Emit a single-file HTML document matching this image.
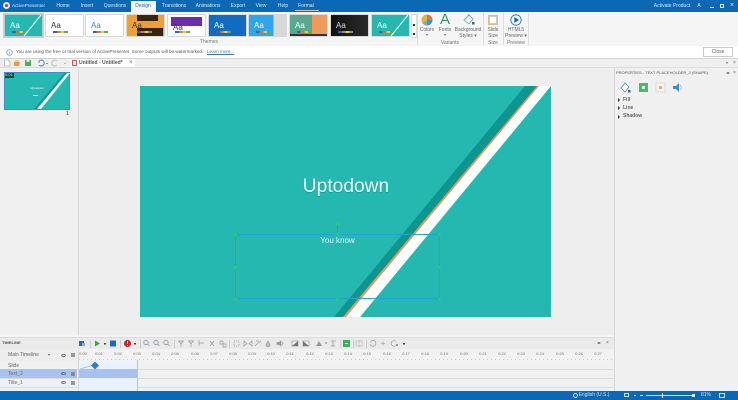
<!DOCTYPE html>
<html><head><meta charset="utf-8">
<style>
html,body{margin:0;padding:0;width:738px;height:400px;overflow:hidden;background:#f0f0f0;font-family:"Liberation Sans",sans-serif;color:#444}
.a{position:absolute}
.t{position:absolute;font-size:5px;line-height:6px;white-space:nowrap;color:#666}
.c{text-align:center;transform:translateX(-50%)}
.tab{position:absolute;top:2px;font-size:5px;line-height:8px;color:#dbe9f5;transform:translateX(-50%);white-space:nowrap}
.th{position:absolute;top:15px;width:37px;height:21px;overflow:hidden;background:#fff;box-shadow:0 0 0 .5px #bbb}
.aa{position:absolute;left:5px;top:6px;font-size:8px;line-height:9px}
.dots{position:absolute;left:7px;top:16px;width:15px;height:1.5px;background:linear-gradient(90deg,#36a,#36a 25%,#c74 25%,#c74 50%,#dc4 50%,#dc4 75%,#6a5 75%)}
.sep{position:absolute;width:1px;background:#ddd}
.h{position:absolute;width:3px;height:3px;border-radius:50%;background:#22d45f}
.tl{position:absolute;top:351px;font-size:4px;line-height:5px;color:#777;transform:translateX(-50%)}
.rl{position:absolute;left:0;width:613px;height:1px;background:#dcdcdc}
</style></head><body>

<!-- title bar -->
<div class="a" style="left:0;top:0;width:738px;height:12px;background:#0a68b4"></div>
<div class="a" style="left:3px;top:2px;width:7px;height:7px;border-radius:50%;background:#e8e8f0"></div>
<div class="a" style="left:5px;top:4px;width:3px;height:3px;border-radius:50%;background:#c8333a"></div>
<div class="tab" style="left:28.5px;top:2px;font-size:4.7px;color:#dbe9f5">ActivePresenter</div>
<div class="tab" style="left:63px">Home</div>
<div class="tab" style="left:87px">Insert</div>
<div class="tab" style="left:115px">Questions</div>
<div class="a" style="left:131px;top:1px;width:25px;height:11px;background:#f4f4f4"></div>
<div class="tab" style="left:143px;color:#2a6aa8">Design</div>
<div class="tab" style="left:174px">Transitions</div>
<div class="tab" style="left:208px">Animations</div>
<div class="tab" style="left:238px">Export</div>
<div class="tab" style="left:261px">View</div>
<div class="tab" style="left:283px">Help</div>
<div class="tab" style="left:306px">Format</div>
<div class="a" style="left:295px;top:10px;width:24px;height:1px;background:#d8c890"></div>
<div class="tab" style="left:672px">Activate Product</div>
<div class="tab" style="left:699px">A</div>
<div class="a" style="left:710px;top:7px;width:4px;height:1px;background:#dbe9f5"></div>
<div class="a" style="left:720px;top:4px;width:4px;height:4px;border:1px solid #dbe9f5;box-sizing:border-box"></div>
<div class="tab" style="left:732px;top:2px;font-size:7px">×</div>

<!-- ribbon -->
<div class="a" style="left:0;top:12px;width:738px;height:34px;background:#f5f5f5"></div>
<div class="a" style="left:3px;top:13px;width:41px;height:25px;background:#cfcfcf"></div>

<div class="th" style="left:5px;background:#24b8b0"><div class="aa" style="color:#fff">Aa</div><div class="dots"></div>
<svg class="a" style="left:0;top:0" width="37" height="21"><path d="M19 21L36 0" stroke="#fff" stroke-width="1"/></svg></div>
<div class="th" style="left:46px"><div class="aa" style="color:#333">Aa</div><div class="dots"></div></div>
<div class="th" style="left:86px"><div class="aa" style="color:#3a7fb5">Aa</div><div class="dots"></div></div>
<div class="th" style="left:127px;background:#f0a030"><div class="a" style="left:10px;top:0;width:21px;height:6px;background:#3a2210"></div><div class="a" style="left:10px;top:13px;width:26px;height:8px;background:#3a2210"></div><div class="aa" style="color:#333">Aa</div><div class="dots" style="left:10px"></div></div>
<div class="th" style="left:168px"><div class="a" style="left:3px;top:2px;width:31px;height:9px;background:#6a2fa8"></div><div class="aa" style="color:#333;top:8px">Aa</div><div class="dots"></div></div>
<div class="th" style="left:209px;background:#0f6cc0"><div class="aa" style="color:#fff">Aa</div><div class="dots"></div></div>
<div class="th" style="left:249px;background:linear-gradient(90deg,#2ea6ea 66%,#d8d8d8 66%)"><div class="aa" style="color:#fff">Aa</div><div class="dots"></div></div>
<div class="th" style="left:290px;background:linear-gradient(90deg,#5aa890 60%,#f09a58 60%)"><div class="a" style="left:0;top:19px;width:37px;height:2px;background:#333"></div><div class="aa" style="color:#fff">Aa</div><div class="dots"></div></div>
<div class="th" style="left:331px;background:linear-gradient(90deg,#111,#2a2a2a)"><div class="aa" style="color:#ddd">Aa</div><div class="dots"></div></div>
<div class="th" style="left:372px;background:#24b8b0"><div class="aa" style="color:#fff">Aa</div><div class="dots"></div>
<svg class="a" style="left:0;top:0" width="37" height="21"><path d="M19 21L36 0" stroke="#fff" stroke-width="1"/></svg></div>
<div class="a" style="left:411px;top:14px;width:6px;height:24px;background:#fafafa;border:.5px solid #ddd;box-sizing:border-box"></div>
<div class="a" style="left:413px;top:24px;width:2px;height:2px;background:#333"></div>
<div class="a" style="left:413px;top:33px;width:2px;height:2px;background:#333"></div>
<div class="t c" style="left:209px;top:39px;color:#777">Themes</div>

<div class="sep" style="left:417px;top:13px;height:32px"></div>
<div class="sep" style="left:483px;top:13px;height:32px"></div>
<div class="sep" style="left:503px;top:13px;height:32px"></div>
<div class="sep" style="left:528px;top:13px;height:32px"></div>

<!-- colors -->
<svg class="a" style="left:421px;top:14px" width="12" height="12"><path d="M6 6V0.5A5.5 5.5 0 0 1 11.5 6Z" fill="#e8742a"/><path d="M6 6H11.5A5.5 5.5 0 0 1 6 11.5Z" fill="#2f9fc8"/><path d="M6 6V11.5A5.5 5.5 0 0 1 1.2 8.7Z" fill="#a0a0a0"/><path d="M6 6L1.2 8.7A5.5 5.5 0 0 1 6 .5Z" fill="#e8b040"/></svg>
<div class="t c" style="left:427px;top:27px">Colors</div>
<div class="t c" style="left:427px;top:32px;font-size:4px">▾</div>
<div class="t c" style="left:445px;top:11px;font-size:15px;line-height:17px;color:#2f9e4f">A</div>
<div class="t c" style="left:445px;top:27px">Fonts</div>
<div class="t c" style="left:445px;top:32px;font-size:4px">▾</div>
<svg class="a" style="left:462px;top:13px" width="14" height="13"><path d="M2 7L7 2L11 6L7 11Z" fill="#eef4fa" stroke="#6a9cc4" stroke-width=".8"/><path d="M6 1L8 3" stroke="#6a9cc4" stroke-width=".8"/><rect x="10" y="9" width="2.5" height="2.5" fill="#2a6aa8"/></svg>
<div class="t c" style="left:468px;top:27px">Background</div>
<div class="t c" style="left:468px;top:33px">Styles ▾</div>
<div class="t c" style="left:450px;top:40px;color:#777">Variants</div>

<div class="a" style="left:488px;top:15px;width:10px;height:10px;background:#fff;border:1px solid #e0b888;box-sizing:border-box;outline:1px solid #ccc;outline-offset:-2px"></div>
<div class="t c" style="left:493px;top:27px">Slide</div>
<div class="t c" style="left:493px;top:33px">Size</div>
<div class="t c" style="left:493px;top:40px;color:#777">Size</div>

<svg class="a" style="left:510px;top:14px" width="12" height="12"><circle cx="6" cy="6" r="5.2" fill="#eef5fb" stroke="#2a78b8" stroke-width=".9"/><path d="M4.3 3L9 6L4.3 9Z" fill="#1a6cb0"/></svg>
<div class="t c" style="left:516px;top:27px">HTML5</div>
<div class="t c" style="left:516px;top:33px">Preview ▾</div>
<div class="t c" style="left:516px;top:40px;color:#777">Preview</div>

<!-- notice -->
<div class="a" style="left:0;top:46px;width:738px;height:12px;background:#fff"></div>
<svg class="a" style="left:6px;top:49px" width="7" height="7"><circle cx="3.5" cy="3.5" r="2.8" fill="none" stroke="#5a8ab0" stroke-width=".6"/><path d="M3.5 3V5.2M3.5 1.8V2.4" stroke="#5a8ab0" stroke-width=".6"/></svg>
<div class="t" style="left:16px;top:49px;color:#555;font-size:4.6px">You are using the free or trial version of ActivePresenter. Some outputs will be watermarked.</div>
<div class="t" style="left:207px;top:49px;color:#3a7ab8;font-size:4.6px;text-decoration:underline">Learn more...</div>
<div class="a" style="left:703px;top:47px;width:30px;height:10px;background:#fdfdfd;border:1px solid #ccc;box-sizing:border-box"></div>
<div class="t c" style="left:718px;top:49px">Close</div>

<!-- tab strip -->
<div class="a" style="left:0;top:58px;width:738px;height:1px;background:#d4d4d4"></div>
<div class="a" style="left:0;top:59px;width:738px;height:9px;background:#efefef"></div>
<svg class="a" style="left:3px;top:59px" width="30" height="8"><path d="M1.5 1H5L7 3V7H1.5Z" fill="#fff" stroke="#999" stroke-width=".6"/><path d="M11 3H17L16 7H11Z" fill="#e89a40"/><path d="M12 1H16V3H12Z" fill="#f4c890"/><rect x="22" y="1" width="6" height="6" fill="#4caa5c"/><rect x="23.5" y="1" width="3" height="2" fill="#d8f0e0"/></svg>
<svg class="a" style="left:37px;top:59px" width="30" height="8"><path d="M2 2V4M2 2A3 3 0 1 1 2 6" fill="none" stroke="#3a80c0" stroke-width=".9"/><path d="M9 4L11 4L10 5Z" fill="#333"/><path d="M20 2A3 3 0 1 0 20 6" fill="none" stroke="#bbb" stroke-width=".9"/><path d="M27 4L29 4L28 5Z" fill="#888"/></svg>
<div class="a" style="left:70px;top:59px;width:65px;height:9px;background:#fff"></div>
<div class="a" style="left:72px;top:60px;width:5px;height:6px;background:#fbeaea;border:.5px solid #c55;box-sizing:border-box"></div>
<div class="t" style="left:79px;top:60px;font-weight:bold;color:#555">Untitled - Untitled*</div>
<div class="t" style="left:129px;top:60px;font-size:6px">×</div>
<div class="t" style="left:726px;top:60px;font-size:4px">▾</div>
<div class="t" style="left:733px;top:60px">×</div>
<div class="a" style="left:0;top:67px;width:738px;height:1px;background:#dcdcdc"></div>

<!-- slide pane -->
<div class="a" style="left:0;top:68px;width:78px;height:267px;background:#f0f0f0"></div>
<div class="a" style="left:78px;top:68px;width:1px;height:267px;background:#d8d8d8"></div>
<svg class="a" style="left:4px;top:72px" width="66" height="38">
<rect x=".5" y=".5" width="65" height="37" fill="#24b8b0" stroke="#3d8fd0"/>
<polygon points="30,37 33,37 65,1 60,1" fill="#0d9a94"/>
<polygon points="33,37 37,37 66,1 63,1" fill="#fff"/>
<rect x="1" y="1" width="9" height="5" fill="#1f4a4a"/>
</svg>
<div class="t" style="left:5px;top:72px;font-size:4px;color:#cde">0:01</div>
<div class="t c" style="left:37px;top:86px;font-size:3px;line-height:4px;color:#fff">Uptodown</div>
<div class="a" style="left:33px;top:95px;width:5px;height:1px;background:#bfeee8"></div>
<div class="t" style="left:66px;top:111px;color:#333">1</div>

<!-- canvas -->
<div class="a" style="left:79px;top:68px;width:535px;height:267px;background:#eeeeee"></div>
<svg class="a" style="left:140px;top:86px" width="411" height="231" viewBox="0 0 411 231">
<rect width="411" height="231" fill="#24b8b0"/>
<polygon points="194,231 203,231 397,0 385,0" fill="#0c9690"/>
<polygon points="203,231 206,231 399,0 397,0" fill="#e29a5e"/>
<polygon points="206,231 220,231 411,0 399,0" fill="#fff"/>
</svg>
<div class="t c" style="left:346px;top:175px;font-size:19.2px;line-height:23px;color:#f0fafa;text-shadow:0 1px 1px rgba(0,60,60,.25)">Uptodown</div>
<div class="t c" style="left:337.5px;top:236px;font-size:8px;line-height:10px;color:#eafafa">You know</div>

<!-- selection -->
<div class="a" style="left:235px;top:234px;width:205px;height:65px;border:1px solid #2aa0cc;box-sizing:border-box"></div>
<div class="a" style="left:337px;top:224px;width:1px;height:10px;background:#2aa0cc"></div>
<div class="h" style="left:336px;top:222px"></div>
<div class="h" style="left:234px;top:233px"></div><div class="h" style="left:336px;top:233px"></div><div class="h" style="left:438px;top:233px"></div>
<div class="h" style="left:234px;top:266px"></div><div class="h" style="left:438px;top:266px"></div>
<div class="h" style="left:234px;top:298px"></div><div class="h" style="left:336px;top:298px"></div><div class="h" style="left:438px;top:298px"></div>

<!-- properties -->
<div class="a" style="left:614px;top:68px;width:1px;height:323px;background:#d8d8d8"></div>
<div class="a" style="left:615px;top:68px;width:123px;height:323px;background:#f0f0f0"></div>
<div class="t" style="left:616px;top:70px;font-size:4px;color:#555">PROPERTIES - TEXT PLACEHOLDER_2 (SHAPE)</div>
<div class="t" style="left:726px;top:70px;font-size:4px">◂▸</div>
<div class="t" style="left:733px;top:70px">×</div>
<svg class="a" style="left:619px;top:81px" width="70" height="14">
<path d="M2 7L6 2L10 6L6 11Z" fill="#fff" stroke="#4a8cc0" stroke-width=".8"/><rect x="9" y="9" width="2.5" height="2.5" fill="#1a6cb0"/>
<rect x="20" y="2" width="9" height="9" fill="#4db870"/><rect x="23" y="5" width="3" height="3" fill="#d8f0e0"/>
<rect x="37" y="2" width="9" height="9" fill="#f4f4f4" stroke="#c8c8c8" stroke-width=".6"/><rect x="40" y="5" width="3" height="3" fill="#eeb050"/>
<path d="M54 5H57L60 2V11L57 8H54Z" fill="#3a8cd0"/><path d="M61 4A3 3 0 0 1 61 9" fill="none" stroke="#9cc4e4" stroke-width=".9"/>
</svg>
<div class="a" style="left:618px;top:98px;width:0;height:0;border-left:2.5px solid #333;border-top:2px solid transparent;border-bottom:2px solid transparent"></div>
<div class="t" style="left:623px;top:97px;font-weight:bold">Fill</div>
<div class="a" style="left:618px;top:106px;width:0;height:0;border-left:2.5px solid #333;border-top:2px solid transparent;border-bottom:2px solid transparent"></div>
<div class="t" style="left:623px;top:105px;font-weight:bold">Line</div>
<div class="a" style="left:618px;top:115px;width:0;height:0;border-left:2.5px solid #333;border-top:2px solid transparent;border-bottom:2px solid transparent"></div>
<div class="t" style="left:623px;top:113px;font-weight:bold">Shadow</div>

<!-- timeline -->
<div class="a" style="left:0;top:335px;width:614px;height:3px;background:#f4f4f4"></div>
<div class="a" style="left:0;top:337px;width:614px;height:1px;background:#dcdcdc"></div>
<div class="a" style="left:0;top:338px;width:614px;height:11px;background:#eaeaea"></div>
<div class="t" style="left:2px;top:340px;font-size:4px;font-weight:bold;color:#555">TIMELINE</div>
<div class="t" style="left:597px;top:340px;font-size:4px">◂▸</div>
<div class="t" style="left:606px;top:340px">×</div>
<svg class="a" style="left:0;top:338px" width="420" height="11" fill="none">
<rect x="79" y="3" width="5" height="5" fill="#2d6cb0"/><rect x="82" y="5" width="3" height="3" fill="#9ab"/>
<path d="M90.5 2V10M120.5 2V10M140.5 2V10M174.5 2V10M229.5 2V10M340.5 2V10M353.5 2V10M366.5 2V10" stroke="#ccc"/>
<path d="M95 2.5L100 5.5L95 8.5Z" fill="#2fa84f"/><rect x="104" y="5" width="2" height="1.5" fill="#444"/>
<rect x="110" y="2.5" width="6" height="6" fill="#1a6cc0"/>
<circle cx="127.5" cy="5.5" r="3.6" fill="#d8202a"/><path d="M127.5 3V6M127.5 7V8" stroke="#fff" stroke-width=".8"/><rect x="134" y="5" width="2" height="1.5" fill="#444"/>
<g stroke="#8a9aa8" stroke-width=".8">
<circle cx="146" cy="4.5" r="2.2"/><path d="M147.6 6L149.5 8"/>
<circle cx="156" cy="4.5" r="2.2"/><path d="M157.6 6L159.5 8"/>
<circle cx="166" cy="4.5" r="2.2"/><path d="M167.6 6L169.5 8"/>
</g>
<g stroke="#999" stroke-width=".7">
<path d="M178 3H184M179 3L181 6L183 3M181 6V9"/><path d="M188 3H194M189 3L191 6L193 3M191 6V9"/><path d="M199 2V8M199 5H204"/>
<path d="M210 3L214 8M214 3L210 8"/><path d="M220 3H223V6H220ZM223 6H226V9H223Z"/>
<rect x="234" y="3" width="5" height="5" stroke-dasharray="1 1"/><path d="M244 3L247 5.5L244 8ZM252 3L249 5.5L252 8Z"/>
<path d="M255 8L258 5L261 3M256 3H259"/><path d="M268 3L266 7A2 2 0 0 0 270 7Z" fill="#bbb"/>
<path d="M277 4.5H279L281 3V8L279 6.5H277Z" fill="#999"/><path d="M282 4L283 5.5L282 7"/>
</g>
<rect x="292" y="3" width="6" height="5" fill="#f4f4f4" stroke="#888" stroke-width=".6"/><path d="M292 8L298 3V8Z" fill="#777"/>
<rect x="303" y="3" width="6" height="5" fill="#f4f4f4" stroke="#888" stroke-width=".6"/><path d="M303 3L309 8H303Z" fill="#777"/>
<path d="M316 8L319 3L322 8Z" fill="#999"/><path d="M325 5H327" stroke="#777"/><path d="M331 3H336M333 3V8M331 8H335" stroke="#999" stroke-width=".8"/>
<rect x="343" y="2" width="7" height="7" fill="#3fae5a"/><path d="M345 5.5H348" stroke="#d8f0e0"/>
<rect x="356" y="3" width="6" height="5" stroke="#bbb" stroke-width=".7"/><path d="M359 2V9" stroke="#bbb" stroke-width=".7"/>
<path d="M371 3A3 3 0 1 1 370 6M371 3V5" stroke="#999" stroke-width=".7"/><path d="M381 5.5H385M383 3.5V7.5" stroke="#aaa" stroke-width=".8"/>
<path d="M396 3.5A2.8 2.8 0 1 0 396 7.5" stroke="#999" stroke-width=".7"/><rect x="396" y="6" width="2" height="2" fill="#999"/>
<rect x="403" y="5" width="2" height="1.5" fill="#444"/>
</svg>

<div class="a" style="left:0;top:349px;width:78px;height:12px;background:#ededed"></div>
<div class="t" style="left:8px;top:352px;font-size:5px">Main Timeline</div>
<div class="t" style="left:48px;top:352px;font-size:4px">▾</div>
<div class="a" style="left:61px;top:354px;width:5px;height:3px;border:.7px solid #777;border-radius:50%;box-sizing:border-box"></div>
<div class="a" style="left:71px;top:353px;width:4px;height:4px;background:#999"></div>
<div class="a" style="left:79px;top:349px;width:535px;height:12px;background:#f2f2f2"></div>
<div class="a" style="left:79px;top:359px;width:535px;height:1px;background:repeating-linear-gradient(90deg,#ccc 0,#ccc 1px,transparent 1px,transparent 4px)"></div>
<div class="tl" style="left:83px">0:00</div><div class="tl" style="left:99px">0:01</div><div class="tl" style="left:118px">0:02</div><div class="tl" style="left:137px">0:03</div><div class="tl" style="left:156px">0:04</div><div class="tl" style="left:175px">0:05</div><div class="tl" style="left:195px">0:06</div><div class="tl" style="left:214px">0:07</div><div class="tl" style="left:233px">0:08</div><div class="tl" style="left:252px">0:09</div><div class="tl" style="left:271px">0:10</div><div class="tl" style="left:290px">0:11</div><div class="tl" style="left:310px">0:12</div><div class="tl" style="left:329px">0:13</div><div class="tl" style="left:348px">0:14</div><div class="tl" style="left:367px">0:15</div><div class="tl" style="left:387px">0:16</div><div class="tl" style="left:406px">0:17</div><div class="tl" style="left:425px">0:18</div><div class="tl" style="left:444px">0:19</div><div class="tl" style="left:464px">0:20</div><div class="tl" style="left:483px">0:21</div><div class="tl" style="left:502px">0:22</div><div class="tl" style="left:521px">0:23</div><div class="tl" style="left:540px">0:24</div><div class="tl" style="left:560px">0:25</div><div class="tl" style="left:579px">0:26</div><div class="tl" style="left:598px">0:27</div>

<div class="a" style="left:0;top:361px;width:614px;height:30px;background:#f0f0f0"></div>
<div class="rl" style="top:369px"></div><div class="rl" style="top:378px"></div><div class="rl" style="top:387px"></div>
<div class="a" style="left:78px;top:349px;width:1px;height:42px;background:#d8d8d8"></div>
<div class="a" style="left:79px;top:361px;width:58px;height:30px;background:#eaf0fd"></div>
<div class="a" style="left:0;top:369px;width:77px;height:9px;background:#a9c1ee"></div>
<div class="a" style="left:79px;top:369px;width:58px;height:9px;background:#a9c1ee"></div>
<div class="a" style="left:137px;top:360px;width:1px;height:31px;background:#eeb0b8"></div>
<svg class="a" style="left:80px;top:361px" width="20" height="9"><path d="M0 8L14 4" stroke="#b8c4d4" stroke-width="1"/><path d="M15 .5L19 4.5L15 8.5L11 4.5Z" fill="#2a80c8"/></svg>
<div class="t" style="left:8px;top:363px">Slide</div>
<div class="t" style="left:8px;top:371px">Text_2</div>
<div class="t" style="left:8px;top:380px">Title_1</div>
<div class="a" style="left:61px;top:372px;width:5px;height:3px;border:.7px solid #667;border-radius:50%;box-sizing:border-box"></div>
<div class="a" style="left:71px;top:372px;width:4px;height:4px;background:#889"></div>
<div class="a" style="left:61px;top:381px;width:5px;height:3px;border:.7px solid #777;border-radius:50%;box-sizing:border-box"></div>
<div class="a" style="left:71px;top:381px;width:4px;height:4px;background:#999"></div>

<!-- status bar -->
<div class="a" style="left:0;top:391px;width:738px;height:9px;background:#0a68b4"></div>
<div class="a" style="left:573px;top:393px;width:5px;height:5px;border:.7px solid #cfe2f2;border-radius:50%;box-sizing:border-box"></div>
<div class="tab" style="left:594px;top:392px;font-size:5px;line-height:7px;color:#cfe2f2">English (U.S.)</div>
<div class="a" style="left:624px;top:393px;width:5px;height:4px;border:.7px solid #cfe2f2;box-sizing:border-box"></div>
<div class="a" style="left:634px;top:395px;width:2px;height:1px;background:#e0ecf6"></div>
<div class="a" style="left:640px;top:395px;width:3px;height:1px;background:#e0ecf6"></div>
<div class="a" style="left:646px;top:395px;width:47px;height:1px;background:#cfe2f2"></div>
<div class="a" style="left:662px;top:393px;width:1px;height:5px;background:#fff"></div>
<div class="a" style="left:692px;top:394px;width:3px;height:3px;background:#e0ecf6"></div>
<div class="tab" style="left:706px;top:392px;line-height:7px;color:#cfe2f2">81%</div>
<div class="a" style="left:719px;top:393px;width:6px;height:5px;border:.7px solid #cfe2f2;box-sizing:border-box"></div>

</body></html>
